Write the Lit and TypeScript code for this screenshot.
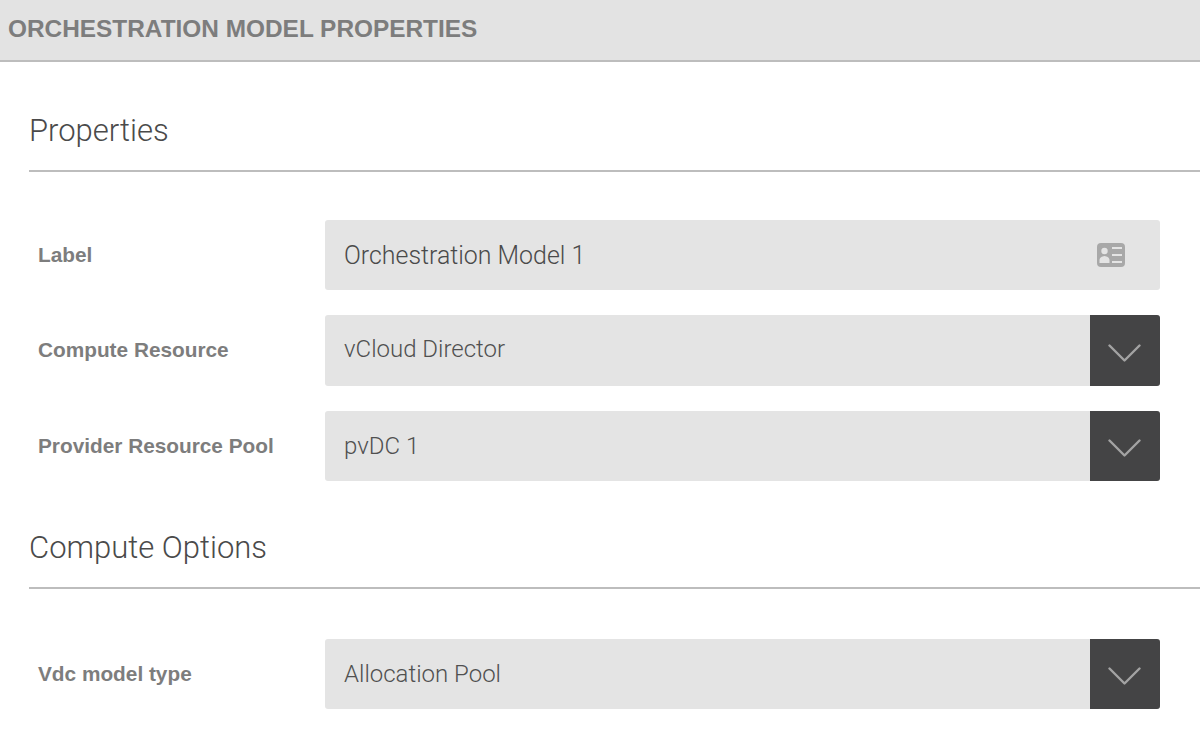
// app.ts
// Orchestration model properties form

import { LitElement, html, css, svg } from 'lit';
import { customElement } from 'lit/decorators.js';

const chevron = svg`<path d="M1.5 1.5 L16.5 16.5 L31.5 1.5" fill="none" stroke="#a3a3a3" stroke-width="2.4" stroke-linecap="round" stroke-linejoin="round"></path>`;

@customElement('app-root')
export class AppRoot extends LitElement {
  static styles = css`
    :host {
      display: block;
      width: 1200px;
      height: 736px;
      overflow: hidden;
      background: #fff;
      font-family: 'Liberation Sans', Arial, sans-serif;
    }

    .topbar {
      height: 57px;
      padding: 0 0 3px 8px;
      display: flex;
      align-items: center;
      background: #e3e3e3;
      border-bottom: 2px solid #bdbdbd;
      color: #7d7d7d;
      font-size: 24.4px;
      font-weight: 700;
    }

    .section {
      margin-left: 29px;
      display: flex;
      align-items: center;
      box-sizing: border-box;
      border-bottom: 2px solid #bdbdbd;
      color: #4a4a4a;
      font-family: Roboto, sans-serif;
      font-weight: 300;
      font-size: 31px;
    }

    .section.first {
      margin-top: 44px;
      margin-bottom: 48px;
      height: 66px;
      padding-bottom: 16px;
    }

    .section.second {
      margin-top: 17px;
      margin-bottom: 50px;
      height: 91px;
      padding-top: 10px;
    }

    .row {
      display: flex;
      align-items: center;
      margin-right: 40.5px;
      padding-left: 38px;
    }

    .row + .row {
      margin-top: 25px;
    }

    .label {
      width: 287px;
      flex: none;
      color: #7d7d7d;
      font-size: 20.8px;
      font-weight: 700;
    }

    .field {
      flex: 1;
      height: 70px;
      display: flex;
      align-items: center;
      justify-content: space-between;
      box-sizing: border-box;
      padding-left: 19px;
      border-radius: 3px;
      background: #e4e4e4;
      color: #505050;
      font-family: Roboto, sans-serif;
      font-weight: 300;
      font-size: 24px;
      overflow: hidden;
    }

    .field.input {
      font-size: 24.9px;
      color: #4a4a4a;
    }

    .row.tall .field {
      height: 71px;
    }

    .row.tall .label {
      padding-bottom: 2px;
    }

    .row.tall .value {
      padding-bottom: 4px;
    }

    .card-icon {
      width: 28px;
      height: 24px;
      margin-right: 34.5px;
    }

    .toggle {
      width: 70px;
      height: 100%;
      flex: none;
      display: flex;
      align-items: center;
      justify-content: center;
      background: #444445;
    }

    .toggle svg {
      width: 33px;
      height: 18px;
      margin-top: 4px;
    }
  `;

  private renderSelect(label: string, value: string, tall = false) {
    return html`
      <div class="row ${tall ? 'tall' : ''}">
        <div class="label">${label}</div>
        <div class="field">
          <span class="value">${value}</span>
          <span class="toggle">
            <svg viewBox="0 0 33 18">${chevron}</svg>
          </span>
        </div>
      </div>
    `;
  }

  render() {
    return html`
      <div class="topbar">ORCHESTRATION MODEL PROPERTIES</div>

      <div class="section first">Properties</div>

      <div class="row">
        <div class="label">Label</div>
        <div class="field input">
          <span class="value">Orchestration Model 1</span>
          <svg class="card-icon" viewBox="0 0 28 24">
            <rect width="28" height="24" rx="4" fill="#a8a8a8"></rect>
            <circle cx="7.5" cy="8" r="3.2" fill="#e4e4e4"></circle>
            <path d="M2.5 20 V17 C2.5 14.5 5 13.5 7.5 13 C10 13.5 12.5 14.5 12.5 17 V20 Z" fill="#e4e4e4"></path>
            <path d="M15 5 H25 M15 12 H25 M15 19 H25" stroke="#e4e4e4" stroke-width="2"></path>
          </svg>
        </div>
      </div>
      ${this.renderSelect('Compute Resource', 'vCloud Director', true)}
      ${this.renderSelect('Provider Resource Pool', 'pvDC 1')}

      <div class="section second">Compute Options</div>

      ${this.renderSelect('Vdc model type', 'Allocation Pool')}
    `;
  }
}

declare global {
  interface HTMLElementTagNameMap {
    'app-root': AppRoot;
  }
}
